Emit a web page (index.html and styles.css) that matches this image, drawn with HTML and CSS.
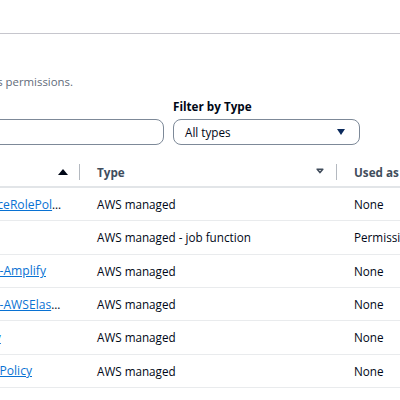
FILE: index.html
```html
<!DOCTYPE html>
<html lang="en">
<head>
<meta charset="utf-8">
<title>Permissions policies</title>
<link rel="stylesheet" href="styles.css">
</head>
<body>
<div class="viewport">
  <div class="topbar"></div>
  <section class="panel">
    <div class="desc"><span>Choose one or more policies to attach to your new role. Policies grant the role its permissions.</span></div>
    <div class="filters">
      <div class="field">
        <div class="search">
          <svg class="search-icon" width="14" height="14" viewBox="0 0 16 16"><circle cx="7" cy="7" r="5" fill="none" stroke="#414d5c" stroke-width="2"/><path d="M11 11l4 4" stroke="#414d5c" stroke-width="2"/></svg>
          <span class="placeholder">Search</span>
        </div>
      </div>
      <div class="field">
        <label class="label">Filter by Type</label>
        <div class="select">
          <span>All types</span>
          <svg class="caret" width="8" height="6" viewBox="0 0 8 6"><path d="M0 0h8L4 6z" fill="#0b2a5c"/></svg>
        </div>
      </div>
    </div>
    <div class="grid">
      <div class="row head">
        <div class="hcell"><span>Policy name</span><svg width="16" height="16" viewBox="0 0 16 16"><path d="M3 11h10L8 5z" fill="#000716"/></svg></div>
        <div class="hcell"><span>Type</span><svg width="16" height="16" viewBox="0 0 16 16"><path d="M5.2 5.2h5.6L8 8.6z" fill="none" stroke="#414d5c" stroke-width="1.6" stroke-linejoin="round"/></svg></div>
        <div class="hcell last"><span>Used as</span></div>
      </div>
      <div class="row">
        <div class="cell"><a class="link" href="#">AccessAnalyzerServiceRolePolicy</a></div>
        <div class="cell">AWS managed</div>
        <div class="cell">None</div>
      </div>
      <div class="row">
        <div class="cell"><a class="link" href="#">AdministratorAccess</a></div>
        <div class="cell">AWS managed - job function</div>
        <div class="cell">Permissions policy (1)</div>
      </div>
      <div class="row">
        <div class="cell"><a class="link" href="#">AdministratorAccess-Amplify</a></div>
        <div class="cell">AWS managed</div>
        <div class="cell">None</div>
      </div>
      <div class="row">
        <div class="cell"><a class="link" href="#">AdministratorAccess-AWSElasticBeanstalk</a></div>
        <div class="cell">AWS managed</div>
        <div class="cell">None</div>
      </div>
      <div class="row">
        <div class="cell"><a class="link" href="#">AIOpsAssistantPolicy</a></div>
        <div class="cell">AWS managed</div>
        <div class="cell">None</div>
      </div>
      <div class="row">
        <div class="cell"><a class="link" href="#">AIOpsConsoleAdminPolicy</a></div>
        <div class="cell">AWS managed</div>
        <div class="cell">None</div>
      </div>
    </div>
  </section>
</div>
</body>
</html>
```
FILE: styles.css
```css
body {
  margin: 0;
  font-family: "Open Sans", "Noto Sans", sans-serif;
  color: #000716;
  background: #ffffff;
}

.viewport {
  width: 400px;
  height: 400px;
  overflow: hidden;
}

.topbar {
  height: 33px;
  border-bottom: 1px solid #c6c6cd;
}

.panel {
  width: 640px;
  margin-left: -133px;
  padding-top: 40px;
}

.desc {
  display: flex;
  justify-content: flex-end;
  width: 206px;
  font-size: 11.4px;
  line-height: 16px;
  color: #5f6b7a;
  white-space: nowrap;
  margin-bottom: 8px;
}

.filters {
  display: flex;
  align-items: flex-end;
  gap: 9px;
}

.field {
  display: flex;
  flex-direction: column;
}

.search {
  width: 297px;
  height: 26px;
  box-sizing: border-box;
  border: 1px solid #7d8998;
  border-radius: 8px;
  display: flex;
  align-items: center;
  gap: 8px;
  padding: 0 12px;
  font-size: 11.7px;
  color: #5f6b7a;
}

.label {
  display: block;
  font-weight: 700;
  font-size: 11.7px;
  line-height: 16px;
  margin-bottom: 5px;
  color: #000716;
}

.select {
  width: 187px;
  height: 26px;
  box-sizing: border-box;
  border: 1px solid #7d8998;
  border-radius: 8px;
  display: flex;
  align-items: center;
  justify-content: space-between;
  padding: 0 14px 0 11px;
  font-size: 11.7px;
}

.grid {
  margin-top: 10px;
}

.row {
  display: grid;
  grid-template-columns: 213px 257px 1fr;
  align-items: center;
  height: 33.333px;
  box-sizing: border-box;
  border-bottom: 1px solid #e9ebed;
  font-size: 11.7px;
}

.row.head {
  height: 33px;
  padding-top: 2px;
  border-bottom: 2px solid #e2e5e8;
}

.hcell {
  display: flex;
  align-items: center;
  justify-content: space-between;
  height: 16px;
  padding: 0 8px 0 17px;
  border-right: 1px solid #b4b9c0;
  font-weight: 700;
  color: #414d5c;
  white-space: nowrap;
}

.hcell.last {
  border-right: none;
}

.cell {
  padding: 0 18px 0 17px;
  white-space: nowrap;
  overflow: hidden;
  text-overflow: ellipsis;
}

.link {
  font-size: 12.1px;
  color: #0972d3;
  text-decoration: underline;
}
```
